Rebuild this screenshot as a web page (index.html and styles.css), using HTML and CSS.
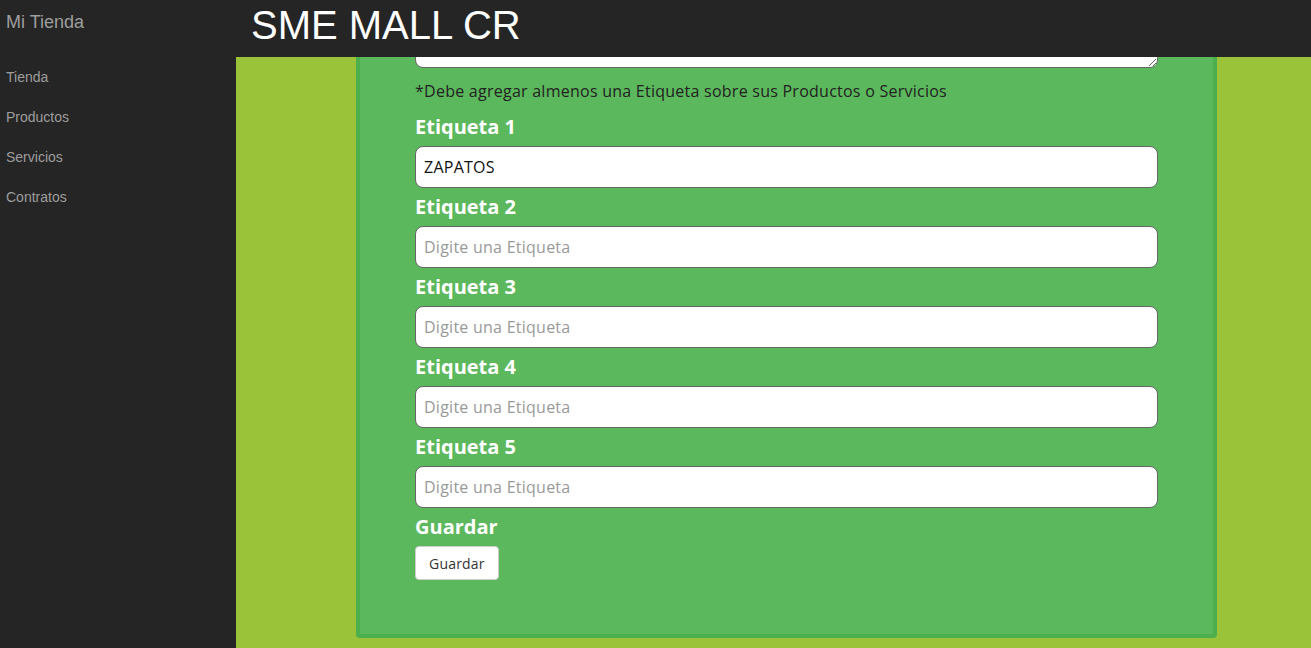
FILE: index.html
```html
<!DOCTYPE html>
<html lang="es">
<head>
<meta charset="utf-8">
<title>SME MALL CR</title>
<link rel="stylesheet" href="styles.css">
</head>
<body>
<div class="app">
  <header class="topbar">
    <a class="brand" href="#">Mi Tienda</a>
    <h1 class="title">SME MALL CR</h1>
  </header>
  <nav class="sidebar">
    <a href="#">Tienda</a>
    <a href="#">Productos</a>
    <a href="#">Servicios</a>
    <a href="#">Contratos</a>
  </nav>
  <main class="main">
    <form class="panel">
      <textarea class="area" aria-label="Descripción"></textarea>
      <p class="note">*Debe agregar almenos una Etiqueta sobre sus Productos o Servicios</p>
      <label class="field-label">Etiqueta 1</label>
      <input class="input" type="text" value="ZAPATOS">
      <label class="field-label">Etiqueta 2</label>
      <input class="input" type="text" placeholder="Digite una Etiqueta">
      <label class="field-label">Etiqueta 3</label>
      <input class="input" type="text" placeholder="Digite una Etiqueta">
      <label class="field-label">Etiqueta 4</label>
      <input class="input" type="text" placeholder="Digite una Etiqueta">
      <label class="field-label">Etiqueta 5</label>
      <input class="input" type="text" placeholder="Digite una Etiqueta">
      <label class="field-label">Guardar</label>
      <div><button class="btn" type="button">Guardar</button></div>
    </form>
  </main>
</div>
</body>
</html>
```
FILE: styles.css
```css
* { box-sizing: border-box; }
html, body { margin: 0; height: 100%; }
body { background: #252525; font-family: "Open Sans", sans-serif; overflow: hidden; }
.app {
  display: grid;
  grid-template-columns: 236px 1fr;
  grid-template-rows: 57px 1fr;
  height: 648px;
}
.topbar {
  grid-column: 1 / 3;
  display: grid;
  grid-template-columns: 236px 1fr;
  align-items: start;
  background: #252525;
}
.brand {
  font-family: "Liberation Sans", Arial, sans-serif;
  font-size: 18px;
  color: #9d9d9d;
  text-decoration: none;
  padding: 11px 6px 0;
  line-height: 22px;
}
.title {
  margin: 0;
  padding: 3px 0 0 15px;
  font-family: "Liberation Sans", Arial, sans-serif;
  font-weight: normal;
  font-size: 40px;
  line-height: 44px;
  color: #fff;
}
.sidebar {
  display: flex;
  flex-direction: column;
  background: #252525;
  padding-top: 0;
}
.sidebar a {
  font-family: "Liberation Sans", Arial, sans-serif;
  font-size: 14px;
  color: #9d9d9d;
  text-decoration: none;
  padding: 0 6px;
  line-height: 40px;
}
.main {
  background: #9bc33a;
  overflow: hidden;
  display: flex;
  flex-direction: column;
  justify-content: flex-end;
}
.panel {
  flex-shrink: 0;
  margin: 0 0 10px 120px;
  width: 861px;
  background: #5cb85c;
  border: 4px solid #4cae4c;
  border-radius: 4px;
  padding: 20px 55px 54px;
  display: flex;
  flex-direction: column;
}
.field-label {
  display: block;
  color: #fff;
  font-weight: bold;
  font-size: 20px;
  line-height: 38px;
}
.area {
  width: 743px;
  height: 110px;
  border: 1px solid #666;
  border-radius: 8px;
  font-family: "Open Sans", sans-serif;
  font-size: 16px;
  padding: 8px;
  margin: 0;
  display: block;
}
.note {
  margin: 12px 0 6px;
  font-size: 16px;
  letter-spacing: 0.25px;
  line-height: 22px;
  color: #222;
}
.input {
  display: block;
  width: 743px;
  height: 42px;
  margin: 0;
  border: 1px solid #666;
  border-radius: 8px;
  padding: 0 8px;
  font-family: "Open Sans", sans-serif;
  font-size: 16px;
  letter-spacing: 0.25px;
  color: #111;
  background: #fff;
}
.input::placeholder { color: #999; }
.btn {
  height: 34px;
  padding: 0 13px;
  border: 1px solid #ccc;
  border-radius: 4px;
  background: #fff;
  color: #333;
  font-family: "Open Sans", sans-serif;
  font-size: 14px;
  letter-spacing: 0.2px;
}
```
